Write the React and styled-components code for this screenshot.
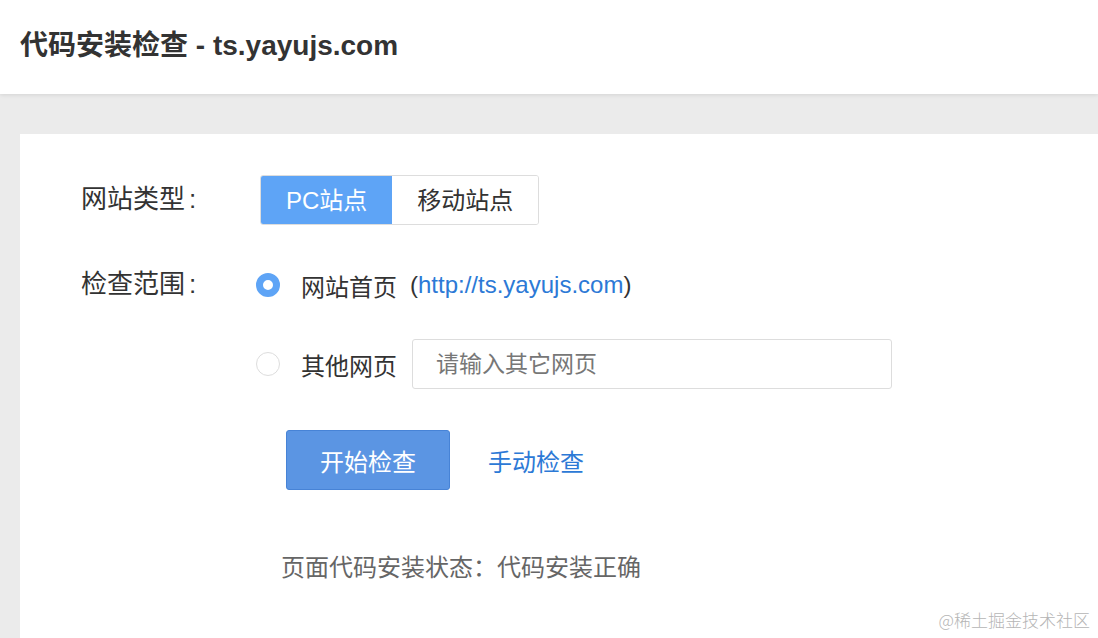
import React, { useState } from "react";
import styled, { createGlobalStyle } from "styled-components";

const GlobalStyle = createGlobalStyle`
    html, body {
        margin: 0;
        padding: 0;
        height: 100%;
        background: #ebebeb;
    }
    body {
        font-family: "Liberation Sans", "Noto Sans CJK SC", sans-serif;
        color: #333;
    }
    #root {
        height: 100%;
    }
`;

const App = () => {
    const [siteType, setSiteType] = useState("pc");
    const [scope, setScope] = useState("home");
    const [otherUrl, setOtherUrl] = useState("");

    return (
        <PageWithStyled>
            <GlobalStyle />
            <HeaderWithStyled>
                <TitleWithStyled>代码安装检查 - ts.yayujs.com</TitleWithStyled>
            </HeaderWithStyled>

            <MainWithStyled>
                <CardWithStyled>
                    <RowWithStyled>
                        <LabelWithStyled>网站类型<ColonWithStyled>:</ColonWithStyled></LabelWithStyled>
                        <SegmentWithStyled>
                            <SegmentButtonWithStyled
                                $active={siteType === "pc"}
                                onClick={() => setSiteType("pc")}
                            >
                                PC站点
                            </SegmentButtonWithStyled>
                            <SegmentButtonWithStyled
                                $active={siteType === "mobile"}
                                onClick={() => setSiteType("mobile")}
                            >
                                移动站点
                            </SegmentButtonWithStyled>
                        </SegmentWithStyled>
                    </RowWithStyled>

                    <ScopeRowWithStyled>
                        <LabelWithStyled>检查范围<ColonWithStyled>:</ColonWithStyled></LabelWithStyled>
                        <OptionListWithStyled>
                            <OptionWithStyled onClick={() => setScope("home")}>
                                <RadioWithStyled $checked={scope === "home"} />
                                <OptionTextWithStyled>网站首页</OptionTextWithStyled>
                                <UrlWithStyled>
                                    (<LinkWithStyled>http://ts.yayujs.com</LinkWithStyled>)
                                </UrlWithStyled>
                            </OptionWithStyled>
                            <OptionWithStyled onClick={() => setScope("other")}>
                                <RadioWithStyled $checked={scope === "other"} />
                                <OptionTextWithStyled>其他网页</OptionTextWithStyled>
                                <InputWithStyled
                                    value={otherUrl}
                                    placeholder="请输入其它网页"
                                    onChange={({ target: { value } }) =>
                                        setOtherUrl(value)
                                    }
                                />
                            </OptionWithStyled>
                        </OptionListWithStyled>
                    </ScopeRowWithStyled>

                    <ActionRowWithStyled>
                        <PrimaryButtonWithStyled>开始检查</PrimaryButtonWithStyled>
                        <LinkButtonWithStyled>手动检查</LinkButtonWithStyled>
                    </ActionRowWithStyled>

                    <StatusWithStyled>页面代码安装状态：代码安装正确</StatusWithStyled>
                </CardWithStyled>
            </MainWithStyled>

            <WatermarkWithStyled>@稀土掘金技术社区</WatermarkWithStyled>
        </PageWithStyled>
    );
};

const PageWithStyled = styled.div`
    position: relative;
    display: flex;
    flex-direction: column;
    height: 100%;
    overflow: hidden;
`;

const HeaderWithStyled = styled.header`
    position: relative;
    z-index: 1;
    flex: 0 0 94px;
    display: flex;
    align-items: center;
    padding: 0 20px 8px;
    box-sizing: border-box;
    background: #fff;
    box-shadow: 0 1px 4px rgba(0, 0, 0, 0.1);
`;

const TitleWithStyled = styled.h1`
    margin: 0;
    font-size: 28px;
    font-weight: bold;
    color: #333;
`;

const MainWithStyled = styled.main`
    flex: 1;
    display: flex;
    padding: 40px 0 0 20px;
    background: #ebebeb;
`;

const CardWithStyled = styled.section`
    flex: 1;
    background: #fff;
    padding: 41px 0 0 61px;
    font-size: 24px;
`;

const RowWithStyled = styled.div`
    display: flex;
    align-items: center;
`;

const LabelWithStyled = styled.div`
    width: 175px;
    height: 50px;
    line-height: 48px;
    font-size: 26px;
    color: #333;
    white-space: nowrap;
`;

const ColonWithStyled = styled.span`
    margin-left: 4px;
`;

const SegmentWithStyled = styled.div`
    display: flex;
    margin-left: 4px;
    height: 50px;
    border: 1px solid #ddd;
    border-radius: 3px;
    overflow: hidden;
    box-sizing: border-box;
`;

const SegmentButtonWithStyled = styled.button`
    border: none;
    margin: 0;
    padding: 0 25px 3px;
    font: inherit;
    font-size: 24px;
    cursor: pointer;
    background: ${({ $active }) => ($active ? "#5ea4f6" : "#fff")};
    color: ${({ $active }) => ($active ? "#fff" : "#333")};
`;

const ScopeRowWithStyled = styled.div`
    display: flex;
    align-items: flex-start;
    margin-top: 35px;
`;

const OptionListWithStyled = styled.div`
    display: flex;
    flex-direction: column;
    gap: 29px;
`;

const OptionWithStyled = styled.div`
    display: flex;
    align-items: center;
    height: 50px;
    cursor: pointer;
`;

const RadioWithStyled = styled.span`
    width: 24px;
    height: 24px;
    border-radius: 50%;
    box-sizing: border-box;
    border: ${({ $checked }) =>
        $checked ? "7px solid #5ea4f6" : "1px solid #ddd"};
    background: #fff;
    margin-right: 21px;
`;

const OptionTextWithStyled = styled.span`
    color: #333;
    margin-right: 13px;
`;

const UrlWithStyled = styled.span`
    font-size: 24px;
    color: #333;
`;

const LinkWithStyled = styled.a`
    color: #2c79d6;
    text-decoration: none;
`;

const InputWithStyled = styled.input`
    width: 480px;
    height: 50px;
    margin-left: 2px;
    box-sizing: border-box;
    border: 1px solid #ddd;
    border-radius: 3px;
    padding: 0 23px;
    font: inherit;
    font-size: 23px;
    color: #333;
    outline: none;

    &::placeholder {
        color: #777;
    }
`;

const ActionRowWithStyled = styled.div`
    display: flex;
    align-items: center;
    margin: 41px 0 0 205px;
`;

const PrimaryButtonWithStyled = styled.button`
    width: 164px;
    height: 60px;
    border: 1px solid #4783d6;
    border-radius: 3px;
    background: #5b95e3;
    color: #fff;
    font: inherit;
    font-size: 24px;
    cursor: pointer;
`;

const LinkButtonWithStyled = styled.a`
    margin-left: 38px;
    color: #2c79d6;
    font-size: 24px;
    cursor: pointer;
`;

const StatusWithStyled = styled.div`
    margin: 63px 0 0 200px;
    line-height: 30px;
    color: #666;
`;

const WatermarkWithStyled = styled.div`
    position: absolute;
    right: 8px;
    bottom: 6px;
    font-size: 17px;
    color: #b5b5b5;
    font-family: "Noto Sans CJK SC", sans-serif;
    font-weight: 300;
`;

export default App;
